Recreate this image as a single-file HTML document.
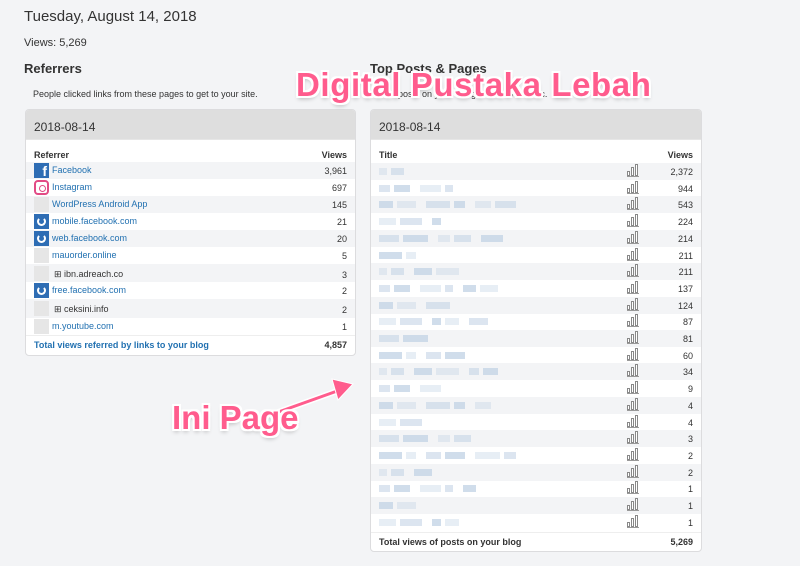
<!DOCTYPE html>
<html><head><meta charset="utf-8"><style>
*{margin:0;padding:0;box-sizing:border-box}
body{width:800px;height:566px;background:#f3f4f6;font-family:"Liberation Sans",sans-serif;color:#333;position:relative;overflow:hidden}
.a{position:absolute}
.panel{position:absolute;background:#fff;border:1px solid #dcdcde;border-radius:4px;overflow:hidden}
.ph{height:30px;background:#dedede;font-size:12px;padding:10px 0 0 8px;color:#333;border-bottom:1px solid #e6e6e6}
.row{position:absolute;left:0;right:0;font-size:9px;color:#333}
.g{background:#f3f4f6}
.lk{color:#2271b1}
.num{position:absolute;right:8px;top:4px}
.ic{position:absolute;left:8px;top:1px;width:15px;height:15px;background:#e6e6e6}
.fb{background:#2e6db4;color:#fff;font-weight:bold;font-size:14px;text-align:right;padding-right:2px;line-height:17px}
.pw{background:#2e6db4}
.pw:after{content:"";position:absolute;left:3px;top:3px;width:5px;height:5px;border:2px solid #fff;border-top-color:transparent;border-radius:50%}
.ig{background:#fff;border:2px solid #e24b85;border-radius:4px}
.ig:after{content:"";position:absolute;left:3px;top:3px;width:5px;height:5px;border:1.5px solid #e24b85;border-radius:50%}
.pk{color:#ff5c8d;font-weight:bold;text-shadow:-2px -2px 0 #fff,2px -2px 0 #fff,-2px 2px 0 #fff,2px 2px 0 #fff,0 2px 0 #fff,0 -2px 0 #fff,2px 0 0 #fff,-2px 0 0 #fff,0 3px 4px rgba(0,0,0,.25)}
.bl{position:absolute;top:5px;height:7px;background:#c4d4e6}
.bar{position:absolute;left:256px;top:2px;width:12px;height:12px;border-bottom:1px solid #999}
.bar i{position:absolute;bottom:0;width:3px;border:1px solid #888;background:#fff}
</style></head><body>
<div class="a" style="left:24px;top:8px;font-size:15px;color:#333">Tuesday, August 14, 2018</div>
<div class="a" style="left:24px;top:37px;font-size:11px">Views: 5,269</div>
<div class="a" style="left:24px;top:61px;font-size:13px;font-weight:bold">Referrers</div>
<div class="a" style="left:33px;top:89px;font-size:9px">People clicked links from these pages to get to your site.</div>
<div class="a" style="left:370px;top:61px;font-size:13px;font-weight:bold">Top Posts &amp; Pages</div>
<div class="a" style="left:398px;top:89px;font-size:9px">posts on your site get the most traffic.</div>

<div class="panel" style="left:25px;top:109px;width:331px;height:247px">
<div class="ph">2018-08-14</div>
<div class="row" style="top:40px;font-weight:bold;padding-left:8px">Referrer<span class="num" style="top:0">Views</span></div>
<div class="row g" style="top:52px;height:17px"><div class="ic fb">f</div><span class="a lk" style="left:26px;top:3px">Facebook</span><span class="num">3,961</span></div>
<div class="row" style="top:69px;height:17px"><div class="ic ig"></div><span class="a lk" style="left:26px;top:3px">Instagram</span><span class="num">697</span></div>
<div class="row g" style="top:86px;height:17px"><div class="ic"></div><span class="a lk" style="left:26px;top:3px">WordPress Android App</span><span class="num">145</span></div>
<div class="row" style="top:103px;height:17px"><div class="ic pw"></div><span class="a lk" style="left:26px;top:3px">mobile.facebook.com</span><span class="num">21</span></div>
<div class="row g" style="top:120px;height:17px"><div class="ic pw"></div><span class="a lk" style="left:26px;top:3px">web.facebook.com</span><span class="num">20</span></div>
<div class="row" style="top:137px;height:17px"><div class="ic"></div><span class="a lk" style="left:26px;top:3px">mauorder.online</span><span class="num">5</span></div>
<div class="row g" style="top:154px;height:18px"><div class="ic" style="top:2px"></div><span class="a" style="left:28px;top:5px">⊞ ibn.adreach.co</span><span class="num" style="top:6px">3</span></div>
<div class="row" style="top:172px;height:17px"><div class="ic pw"></div><span class="a lk" style="left:26px;top:3px">free.facebook.com</span><span class="num">2</span></div>
<div class="row g" style="top:189px;height:19px"><div class="ic" style="top:2px"></div><span class="a" style="left:28px;top:5px">⊞ ceksini.info</span><span class="num" style="top:6px">2</span></div>
<div class="row" style="top:208px;height:17px"><div class="ic"></div><span class="a lk" style="left:26px;top:3px">m.youtube.com</span><span class="num">1</span></div>
<div class="row" style="top:225px;height:18px;border-top:1px solid #eee"><span class="a lk" style="left:8px;top:4px;font-weight:bold">Total views referred by links to your blog</span><span class="num" style="font-weight:bold">4,857</span></div>
</div>

<div class="panel" style="left:370px;top:109px;width:332px;height:443px">
<div class="ph">2018-08-14</div>
<div class="row" style="top:40px;font-weight:bold;padding-left:8px">Title<span class="num" style="top:0">Views</span></div>
<div id="rows"></div>
<div class="row" style="top:422px;height:18px;border-top:1px solid #eee"><span class="a" style="left:8px;top:4px;font-weight:bold">Total views of posts on your blog</span><span class="num" style="font-weight:bold">5,269</span></div>
</div>

<div class="a pk" style="left:296px;top:66px;font-size:33px;letter-spacing:0.6px">Digital Pustaka Lebah</div>
<svg class="a" style="left:260px;top:375px" width="100" height="50"><line x1="10" y1="40" x2="80" y2="15" stroke="#fff" stroke-width="6"/><line x1="10" y1="40" x2="80" y2="15" stroke="#ff5c8d" stroke-width="3"/><polygon points="93,9 72,4 78,25" fill="#ff5c8d" stroke="#fff" stroke-width="1"/></svg>
<div class="a pk" style="left:172px;top:399px;font-size:33px">Ini Page</div>
<script>
var v=["2,372","944","543","224","214","211","211","137","124","87","81","60","34","9","4","4","3","2","2","1","1","1"];
var h="";
for(var i=0;i<22;i++){var t=53+i*16.7;h+='<div class="row'+(i%2==0?' g':'')+'" style="top:'+t+'px;height:17px">';
var x=8;var n=2+(i*7)%5;for(var k=0;k<n;k++){var ww=8+(i*3+k*5)%18;h+='<div class="bl" style="left:'+x+'px;width:'+ww+'px;opacity:'+(0.4+((i+k)%3)*0.2)+'"></div>';x+=ww+4+(k%2)*6;}
h+='<div class="bar"><i style="left:0;height:5px"></i><i style="left:4px;height:9px"></i><i style="left:8px;height:12px"></i></div><span class="num">'+v[i]+'</span></div>';}
document.getElementById("rows").innerHTML=h;
</script>
</body></html>
